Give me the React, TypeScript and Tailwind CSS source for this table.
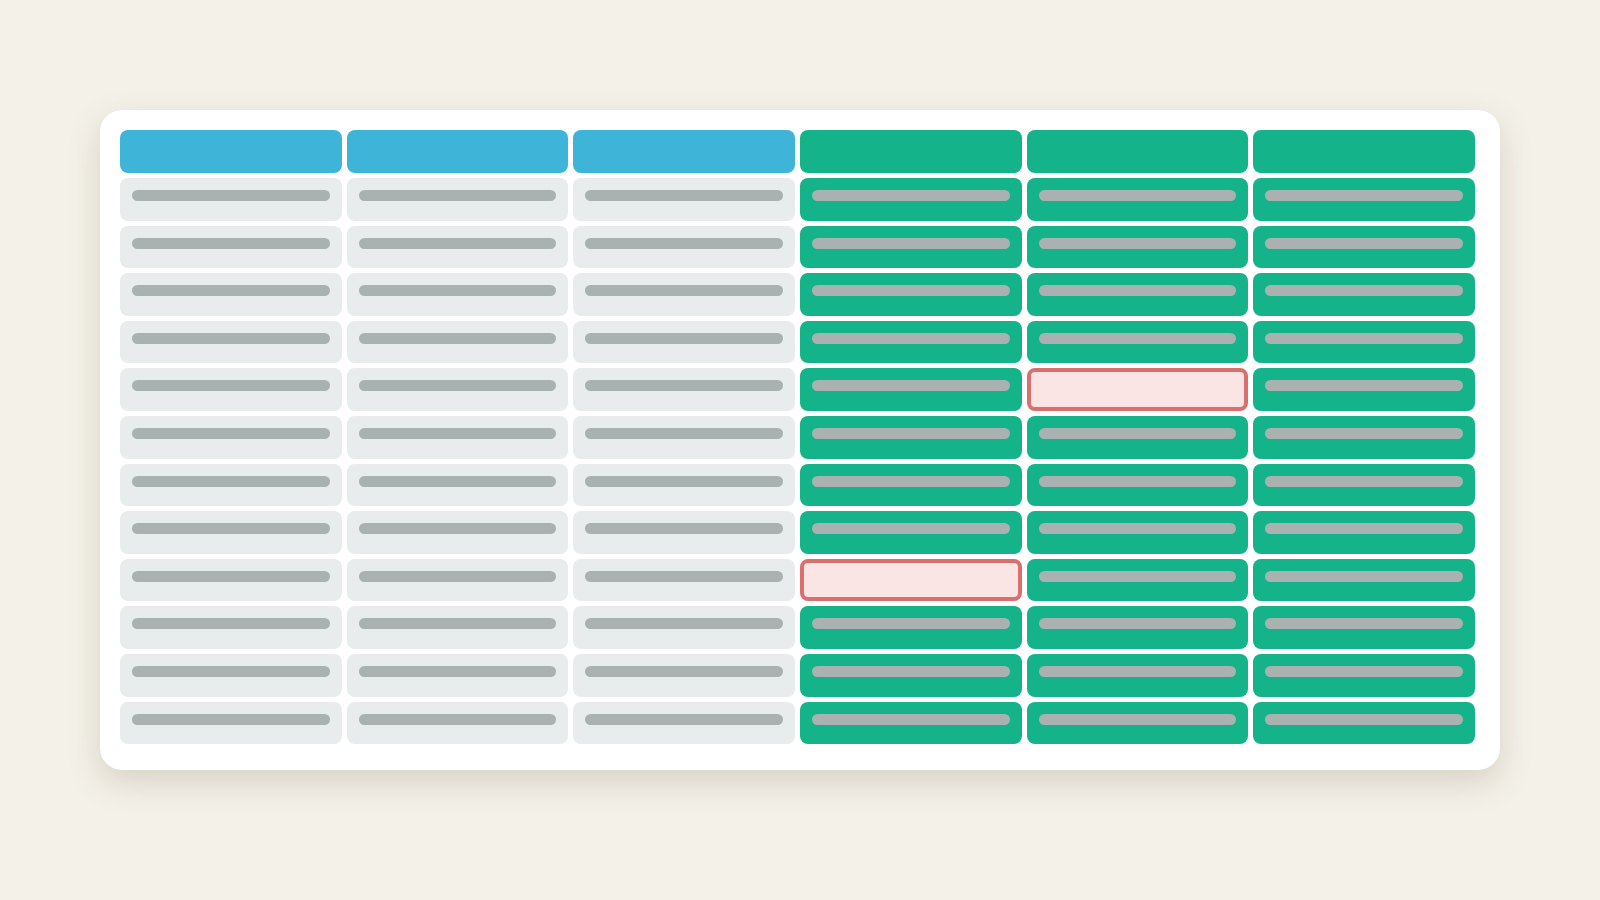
import React from "react";

const COLS = 6;
const ROWS = 12;

// [row, col] of cells flagged as errors
const flagged = new Set(["4-4", "8-3"]);

function Cell({ row, col }: { row: number; col: number }) {
  if (flagged.has(`${row}-${col}`)) {
    return <div className="rounded-[8px] border-4 border-[#d8706e] bg-[#fae4e4]" />;
  }
  const green = col >= 3;
  return (
    <div className={`rounded-[8px] px-3 pt-[12px] ${green ? "bg-[#15b38a]" : "bg-[#e8ecec]"}`}>
      <div className="h-[11px] rounded-full bg-[#a9b1b1]" />
    </div>
  );
}

export default function App() {
  return (
    <div className="min-h-screen w-full bg-[#f4f1e9] pt-[110px]">
      <div className="mx-auto w-[1400px] h-[660px] rounded-[22px] bg-white pl-5 pt-5 pr-[25px] pb-[26px] shadow-[0_12px_32px_rgba(110,100,70,0.22)]">
        <div className="grid grid-cols-6 grid-rows-[43px_repeat(12,42.6px)] gap-[5px]">
          {Array.from({ length: COLS }).map((_, c) => (
            <div
              key={`h${c}`}
              className={`rounded-[8px] ${c < 3 ? "bg-[#3eb5d8]" : "bg-[#15b38a]"}`}
            />
          ))}
          {Array.from({ length: ROWS }).map((_, r) =>
            Array.from({ length: COLS }).map((_, c) => <Cell key={`${r}-${c}`} row={r} col={c} />)
          )}
        </div>
      </div>
    </div>
  );
}
